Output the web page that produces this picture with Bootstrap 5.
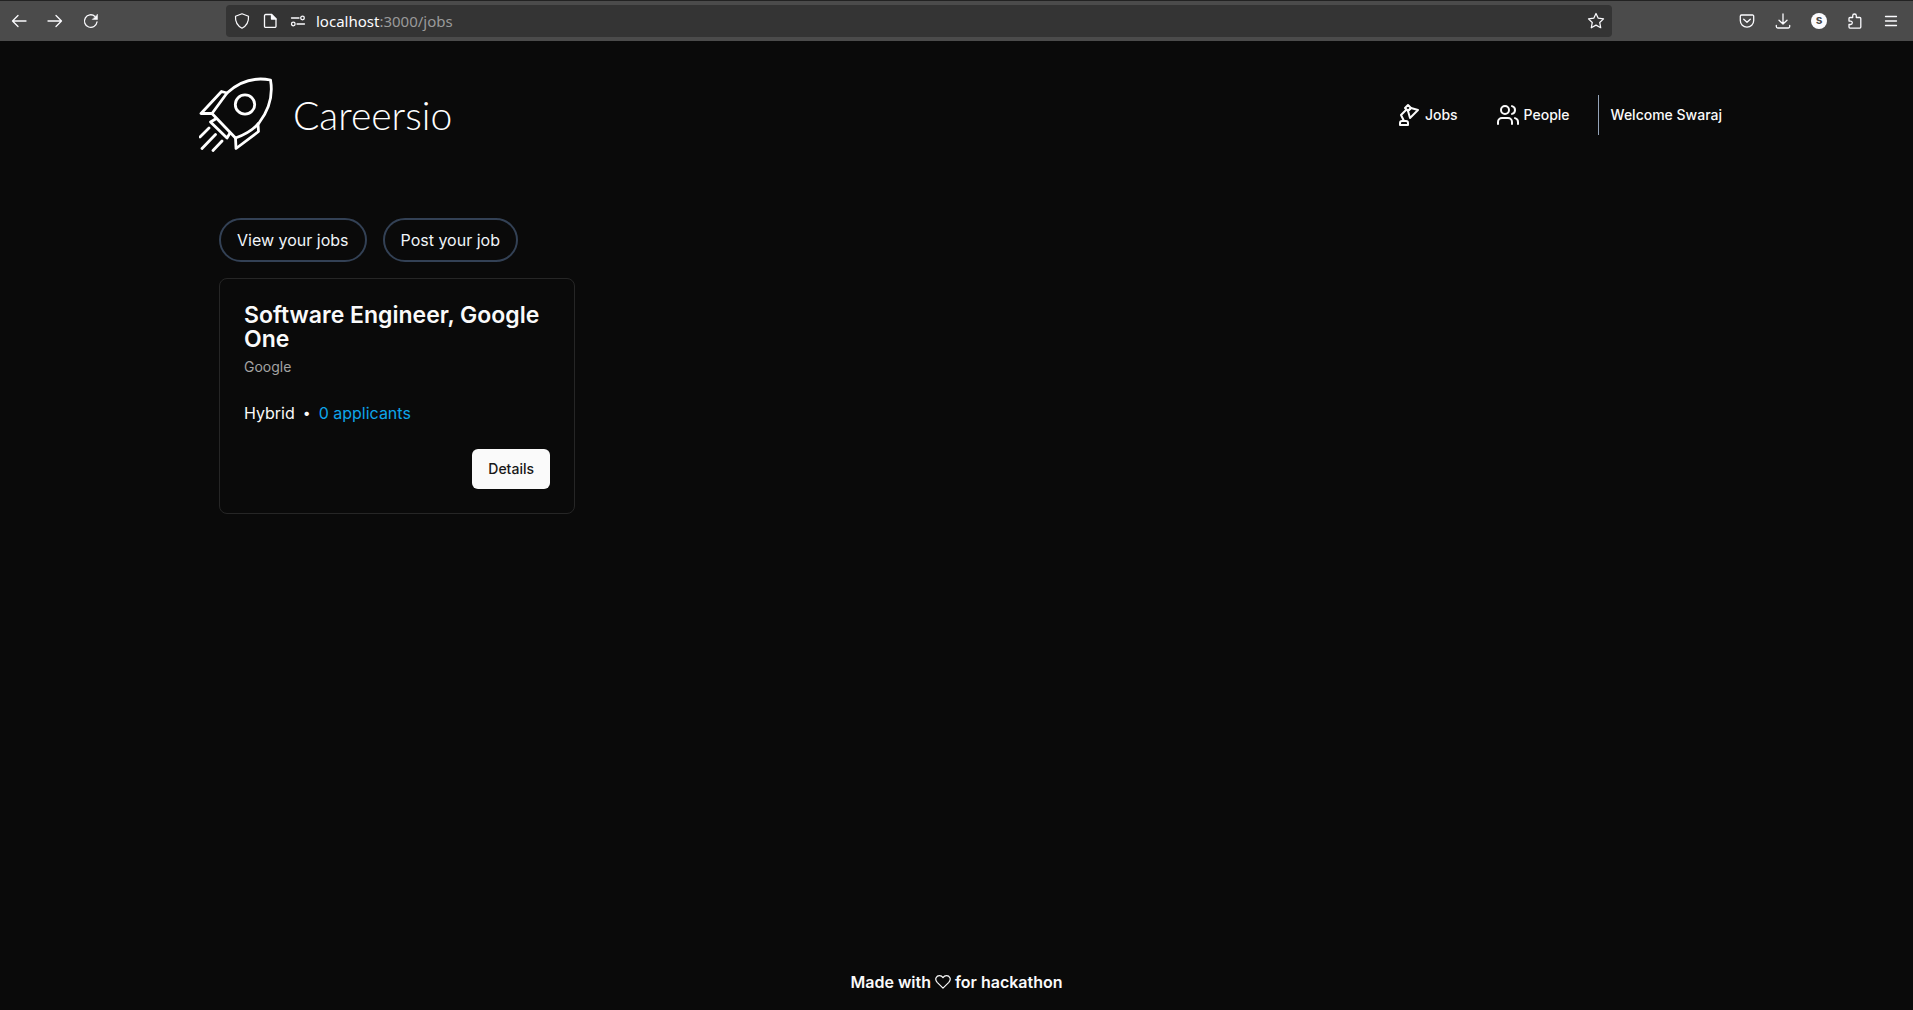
<!DOCTYPE html>
<html lang="en">
<head>
<meta charset="utf-8">
<meta name="viewport" content="width=device-width, initial-scale=1">
<title>Careersio – Jobs</title>
<link href="https://cdn.jsdelivr.net/npm/bootstrap@5.3.0/dist/css/bootstrap.min.css" rel="stylesheet">
<style>
body{background:#0a0a0a;color:#fafafa;font-family:Inter,"Liberation Sans",sans-serif;font-size:16px;line-height:24px}
svg{display:block;flex:none;fill:none;stroke:currentColor;stroke-linecap:round;stroke-linejoin:round}
.toolbar{background:#4b4b4b;border-top:1px solid #222;height:41px;color:#fbfbfe;padding:0 12px 0 8px}
.tool{width:20px;height:20px;padding:0;border:0;background:none;color:inherit;display:flex;align-items:center;justify-content:center}
.nav-tools{gap:16px;width:218px;padding-left:1px}
.address{background:#343434;border-radius:4px;height:32px;padding:0 6px;gap:8px}
.url{font:15px/20px "Noto Sans",sans-serif;color:#9a9a9a}
.url b{color:#fbfbfe;font-weight:400}
.ext-tools{gap:16px;width:289px}
.avatar{width:16px;height:16px;border-radius:50%;background:#fbfbfe;color:#4b4b4b;font-size:12px;line-height:14px;font-weight:700;text-align:center}
.page{width:100%;max-width:1531px;padding-left:8px}
.site-head{padding:35px 0 64px}
.brand{color:#fff;gap:18px;text-decoration:none}
.wordmark{font-family:Lato,sans-serif;font-weight:300;font-size:39px;line-height:72px}
.menu{font-size:14px;line-height:20px;font-weight:500}
.menu a{color:#fafafa;text-decoration:none}
.links{gap:38px}
.welcome{border-left:1px solid #94a3b8;height:40px;padding-left:12px;margin-left:28px}
.jobs{padding:0 20px}
.pill{color:#f1f5f9;border:2px solid #334155;border-radius:22px;padding:8px 16px;line-height:24px;text-decoration:none}
.job{width:356px;max-width:100%;border:1px solid #262626;border-radius:8px;padding:24px;margin-top:16px}
.job h2{font-size:23px;line-height:24px;font-weight:600;margin:0 0 6px}
.firm{font-size:14px;line-height:20px;color:#a3a3a3;margin-bottom:24px}
.dot{font-size:14px}
.applicants{color:#0ea5e9;text-decoration:none}
.details{background:#fafafa;color:#171717;border:0;border-radius:6px;font-size:14px;line-height:20px;font-weight:500;padding:10px 16px;margin-top:24px}
.foot{font-weight:600;padding-bottom:16px;gap:4px}
</style>
<script src="https://cdn.jsdelivr.net/npm/bootstrap@5.3.0/dist/js/bootstrap.bundle.min.js"></script>
</head>
<body class="d-flex flex-column min-vh-100">
<div class="toolbar d-flex align-items-center">
  <div class="nav-tools d-flex">
    <button class="tool" aria-label="Back"><svg width="16" height="16" viewBox="0 0 16 16" stroke-width="1.3"><path d="M15 8H1.5M7 2.5 1.5 8 7 13.5"/></svg></button>
    <button class="tool" aria-label="Forward"><svg width="16" height="16" viewBox="0 0 16 16" stroke-width="1.3"><path d="M1 8h13.500M9 2.500 14.500 8 9 13.500"/></svg></button>
    <button class="tool" aria-label="Reload"><svg width="16" height="16" viewBox="0 0 16 16" stroke-width="1.3"><path d="M14 9a6.300 6.300 0 1 1-2-5.600"/><path d="M14.500 1.500v5h-5z" fill="currentColor" stroke-width=".5"/></svg></button>
  </div>
  <div class="address d-flex align-items-center flex-grow-1">
    <button class="tool" aria-label="Tracking protection"><svg width="16" height="16" viewBox="0 0 16 16" stroke-width="1.200"><path d="M8 .8 14.500 3.200c.3 4.500-1 9-6.500 12-5.500-3-6.800-7.500-6.500-12z"/></svg></button>
    <button class="tool" aria-label="Site information"><svg width="16" height="16" viewBox="0 0 16 16" stroke-width="1.300"><path d="M3.700 1.500h5.800L14 6v7.200a1.200 1.200 0 0 1-1.200 1.200H3.700a1.200 1.200 0 0 1-1.200-1.200V2.700a1.200 1.200 0 0 1 1.200-1.200z"/><path d="M9.500 1.500V6H14z" fill="currentColor"/></svg></button>
    <button class="tool" aria-label="Permissions"><svg width="16" height="16" viewBox="0 0 16 16" stroke-width="1.300"><path d="M1.500 5h7.500M7 11h7.500"/><circle cx="12.500" cy="5" r="1.800"/><circle cx="3.300" cy="11" r="1.800"/></svg></button>
    <div class="url flex-grow-1"><b>localhost</b>:3000/jobs</div>
    <button class="tool" aria-label="Bookmark this page"><svg width="18" height="18" viewBox="0 0 16 16" stroke-width="1.100"><path d="m8 1.300 2 4.200 4.700.6-3.400 3.200.9 4.700L8 11.700 3.800 14l.9-4.700L1.300 6.100 6 5.500z"/></svg></button>
  </div>
  <div class="ext-tools d-flex justify-content-end">
    <button class="tool" aria-label="Save to Pocket"><svg width="16" height="16" viewBox="0 0 16 16" stroke-width="1.300"><path d="M2.500 2h11a1.200 1.200 0 0 1 1.200 1.200V7.500a6.700 6.700 0 0 1-13.400 0V3.200A1.200 1.200 0 0 1 2.500 2z"/><path d="M4.700 6.300 8 9.300l3.300-3"/></svg></button>
    <button class="tool" aria-label="Downloads"><svg width="16" height="16" viewBox="0 0 16 16" stroke-width="1.300"><path d="M8 1v10M4 7.200 8 11l4-3.800M1.300 12.300v1.200a1.500 1.500 0 0 0 1.500 1.500h10.400a1.500 1.500 0 0 0 1.500-1.500v-1.200"/></svg></button>
    <button class="tool" aria-label="Account"><span class="avatar">s</span></button>
    <button class="tool" aria-label="Extensions"><svg width="16" height="16" viewBox="0 0 16 16" stroke-width="1.300"><path d="M5.700 4.500V2.800a1.800 1.800 0 0 1 3.600 0v1.700h3.500a1 1 0 0 1 1 1v8.600a1 1 0 0 1-1 1H3a1 1 0 0 1-1-1v-2.600h1.600a1.700 1.700 0 0 0 0-3.400H2V5.500a1 1 0 0 1 1-1z"/></svg></button>
    <button class="tool" aria-label="Menu"><svg width="16" height="16" viewBox="0 0 16 16" stroke-width="1.300"><path d="M2.500 3.500h11M2.500 8h11M2.500 12.500h11"/></svg></button>
  </div>
</div>

<div class="page mx-auto flex-grow-1">
  <header class="site-head d-flex flex-wrap align-items-center justify-content-between">
    <a href="#" class="brand d-flex align-items-center">
      <svg width="76" height="78" viewBox="0 1 76 78" stroke-width="2.800"><path d="M13 38.500 28 18C41 6 56 2 71.500 5 74.500 22 70 35 60 48 53 56 45 60 36.500 63z"/><circle cx="46" cy="29.500" r="9.700"/><path d="M28 18l-5.500-1.500L2 38.500h11M59 49l.5 7.500L37 73.500l-.5-10.500"/><path d="m16.500 44-5 3L28 63l3-5"/><path d="M10 53l-9 9M16.500 59.500 3 73.500M23 66l-9 9.500"/></svg>
      <span class="wordmark">Careersio</span>
    </a>
    <nav class="menu d-flex align-items-center" aria-label="Main">
      <div class="links d-flex">
        <a href="#" class="d-flex align-items-center gap-1"><svg width="24" height="24" viewBox="0 0 24 24" stroke-width="2"><path d="m14 5-3 3 2 7 8-8-7-2Z"/><path d="m14 5-3 3-3-3 3-3 3 3Z"/><path d="M9.500 6.500 4 12l3 6"/><path d="M3 22v-2a2 2 0 0 1 2-2h4a2 2 0 0 1 2 2v2H3Z"/></svg>Jobs</a>
        <a href="#" class="d-flex align-items-center gap-1"><svg width="24" height="24" viewBox="0 0 24 24" stroke-width="2"><path d="M16 21v-2a4 4 0 0 0-4-4H6a4 4 0 0 0-4 4v2M22 21v-2a4 4 0 0 0-3-3.870M16 3.130a4 4 0 0 1 0 7.750"/><circle cx="9" cy="7" r="4"/></svg>People</a>
      </div>
      <span class="welcome d-flex align-items-center">Welcome Swaraj</span>
    </nav>
  </header>
  <main class="jobs">
    <div class="d-flex flex-wrap gap-3">
      <a href="#" class="pill">View your jobs</a>
      <a href="#" class="pill">Post your job</a>
    </div>
    <article class="job">
      <h2>Software Engineer, Google One</h2>
      <div class="firm">Google</div>
      <div class="d-flex gap-2"><span>Hybrid</span><span class="dot">•</span><a href="#" class="applicants">0 applicants</a></div>
      <div class="d-flex justify-content-end"><button class="details">Details</button></div>
    </article>
  </main>
</div>
<footer class="foot d-flex justify-content-center align-items-center">
  <span>Made with</span>
  <svg width="16" height="16" viewBox="0 0 16 16" stroke-width="1.200"><path d="M8 14.200 2.200 8.300C-.8 5 1.500 1.700 4.500 1.700c1.600 0 2.700.8 3.500 2 .8-1.200 1.900-2 3.500-2 3 0 5.300 3.300 2.300 6.600z"/></svg>
  <span>for hackathon</span>
</footer>
</body>
</html>
